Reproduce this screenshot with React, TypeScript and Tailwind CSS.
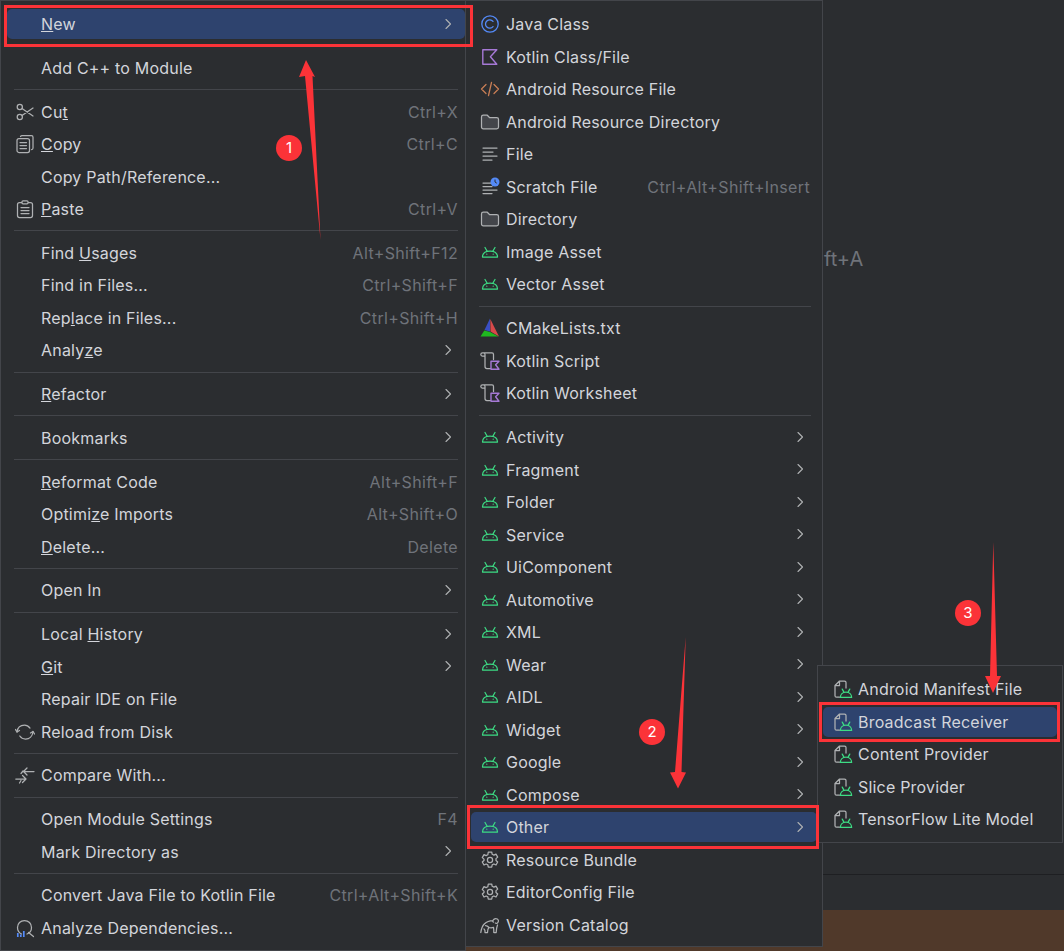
import React from 'react';

const ANDROID = '#3ddc84';
const GREY = '#afb1b3';

type IconName =
  | 'java' | 'kotlin' | 'code' | 'folder' | 'file' | 'scratch' | 'android' | 'cmake'
  | 'script' | 'gear' | 'gradle' | 'androidFile' | 'scissors' | 'copy' | 'paste'
  | 'reload' | 'compare' | 'analyze';

const Icon = ({ name }: { name: IconName }) => {
  const common = { fill: 'none', stroke: GREY, strokeWidth: 1.25, strokeLinecap: 'round' as const, strokeLinejoin: 'round' as const };
  const droid = (
    <g fill="none" stroke={ANDROID} strokeWidth="1.25" strokeLinecap="round" strokeLinejoin="round">
      <path d="M2.500 15C2.500 11 5.500 9 10 9s7.500 2 7.500 6Z" />
      <path d="M5 5.500l2.200 3.700M15 5.500l-2.200 3.700" />
      <path d="M6.800 12.200h.01M13.200 12.200h.01" />
    </g>
  );
  return (
    <svg width="20" height="20" viewBox="0 0 20 20" className="shrink-0">
      {name === 'java' && (
        <g fill="none" stroke="#548af7" strokeWidth="1.3">
          <circle cx="10" cy="10" r="8.200" />
          <path d="M13 7.400A4.200 4.200 0 1 0 13 12.600" strokeLinecap="round" />
        </g>
      )}
      {name === 'kotlin' && <path d="M2.800 2.800h14l-6.400 7 6.400 7.400h-14Z" fill="none" stroke="#a679d6" strokeWidth="1.4" strokeLinejoin="round" />}
      {name === 'code' && (
        <g fill="none" stroke="#c77d55" strokeWidth="1.3" strokeLinecap="round" strokeLinejoin="round">
          <path d="M6 5.500L1.500 10 6 14.500M14 5.500l4.500 4.500-4.500 4.500M11.500 3.500l-3 13" />
        </g>
      )}
      {name === 'folder' && <path d="M1.500 5C1.500 4 2.300 3.200 3.300 3.200h4l2.200 2.300h7.200c1 0 1.800.8 1.800 1.800v7.700c0 1-.8 1.800-1.800 1.800H3.300c-1 0-1.800-.8-1.800-1.800Z" {...common} fill="#43454a" />}
      {name === 'file' && <path d="M3 4h14M3 8h10M3 12h14M3 16h9" {...common} />}
      {name === 'scratch' && (
        <g>
          <path d="M3 6h8M3 9.500h9M3 13h14M3 16.500h9" {...common} />
          <circle cx="15" cy="5" r="4.500" fill="#548af7" />
          <path d="M15 2.500V5l1.800 1.200" fill="none" stroke="#2b2d30" strokeWidth="1" />
        </g>
      )}
      {name === 'android' && droid}
      {name === 'cmake' && (
        <g>
          <path d="M10 .500L4.500 12 10 13.500Z" fill="#3a4fc4" />
          <path d="M10.300 1L19 18.500 10.500 13.500Z" fill="#d84a4a" />
          <path d="M4.300 12.500L.5 18.500H18.500L10 14Z" fill="#1fb81f" />
        </g>
      )}
      {name === 'script' && (
        <g>
          <path d="M.8 3.500C.8 2.500 1.600 1.800 2.500 1.800h9.500c1 0 1.500.8 1.500 1.700v5M3.500 1.800C4.500 1.800 5 2.700 5 3.500V15.500c0 1.200 1 2 2 2h3.500M.8 3.500c0 1 .8 1.500 1.500 1.500H5" {...common} />
          <path d="M11 10.200h8l-3.400 3.600 3.400 4.400h-8Z" fill="#2b2d30" stroke="#a679d6" strokeWidth="1.400" strokeLinejoin="round" />
        </g>
      )}
      {name === 'gear' && (
        <g {...common}>
          <path d="M8.300 2h3.400l.5 2.300 1.700.8 2.100-1 1.700 3-1.700 1.500v1.900l1.700 1.500-1.700 3-2.100-1-1.700.8-.5 2.300H8.300l-.5-2.300-1.700-.8-2.100 1-1.700-3 1.700-1.500V9.100L2.300 7.600l1.700-3 2.100 1 1.700-.8Z" />
          <circle cx="10" cy="10" r="2.600" />
        </g>
      )}
      {name === 'gradle' && (
        <path d="M.8 17.500c.5-3.500 1.500-6.500 3.500-8.500 2.500-2.500 6-3.500 8.500-3.500 1-1.500 3-2.300 4.500-1.500 1.300.8 1.500 2.500.5 3.700-.8 1-2 1-2.500.3M13 5.500c-.5.500-.3 1.500.5 1.700M9 12.500c-1 .8-1.500 2.500-1.500 5H5c.3-1.700 0-2.700-1-3.500M9 12.500c1.500.5 3 .5 4.500-.2.300 2 .5 3.500.3 5.200h2.400c.2-2.800.3-5 1.300-7.500M5.500 10.500c1.500 0 2.500.8 3.500 2" {...common} />
      )}
      {name === 'androidFile' && (
        <g>
          <path d="M6.500 18.200H3.500C2.500 18.200 2 17.500 2 16.700V6.500L6.500 2h5c1 0 1.500.7 1.500 1.500V9M6.500 2v4.500H2" {...common} />
          <g transform="translate(5.500 6) scale(.75)" fill="none" stroke={ANDROID} strokeWidth="1.700" strokeLinecap="round" strokeLinejoin="round">
            <path d="M2.500 16.500C2.500 12.500 5.500 9.500 10 9.500s7.500 3 7.500 7Z" />
            <path d="M5 5.500l2.200 4M15 5.500l-2.200 4" />
          </g>
        </g>
      )}
      {name === 'scissors' && (
        <g {...common}>
          <circle cx="4.800" cy="5" r="2.600" />
          <circle cx="4.800" cy="15" r="2.600" />
          <path d="M7 6.500L18 14M7 13.500L18 6" />
        </g>
      )}
      {name === 'copy' && (
        <g {...common}>
          <rect x="2" y="4.500" width="12.500" height="14" rx="2" />
          <path d="M5.500 2.500c.3-.5.8-.8 1.500-.8h9.500c1 0 1.500.7 1.500 1.500V14c0 .8-.7 1.500-1.500 1.500M5 8.500h6.500M5 11.500h6.500M5 14.500h6.500" />
        </g>
      )}
      {name === 'paste' && (
        <g {...common}>
          <rect x="2.500" y="3.500" width="15" height="15" rx="2" />
          <rect x="7" y="1.800" width="6" height="3" rx="1" fill="#2b2d30" />
          <path d="M6 8.500h8M6 11.500h8M6 14.500h8" />
        </g>
      )}
      {name === 'reload' && (
        <g {...common}>
          <path d="M2 10c.5-4.500 3.500-7 7.500-7 2.500 0 4 1 5.500 3M18 9.500c-.5 4.500-3.500 7.500-7.500 7.500-2.500 0-4.500-1.200-5.700-3" />
          <path d="M.5 7.500L2 10l2.500-1.500M19.500 12L18 9.500 15.500 11" />
        </g>
      )}
      {name === 'compare' && (
        <g {...common}>
          <path d="M9 6.500h10M12 3L8.500 6.500 12 10M6 8.500l2-2.500" />
          <path d="M.8 14h10M7.500 10.500L11 14l-3.500 3.500M4.500 18l1.500-2.500" />
        </g>
      )}
      {name === 'analyze' && (
        <g>
          <path d="M6.500 16C4 14.800 2.500 12.500 2.500 9.500 2.500 5.500 5.500 2.500 9.500 2.500s7 3 7 7c0 3-1.500 5.500-4.500 6.500M13.500 14.500l5 4" {...common} />
          <path d="M2.800 15v4M5.800 16.500V19M8.800 13v6" fill="none" stroke="#548af7" strokeWidth="1.700" />
        </g>
      )}
    </svg>
  );
};

const Chevron = () => (
  <svg width="8" height="14" viewBox="0 0 8 14" className="ml-auto mr-[6px] -mt-px shrink-0">
    <path d="M2 2.500l4.500 4.500L2 11.500" fill="none" stroke="#afb1b3" strokeWidth="1.100" strokeLinecap="round" strokeLinejoin="round" />
  </svg>
);

type Row = {
  label?: React.ReactNode;
  icon?: IconName;
  shortcut?: string;
  more?: boolean;
  active?: boolean;
  sep?: boolean;
};

const sep: Row = { sep: true };

const mainItems: Row[] = [
  { label: <><u>N</u>ew</>, more: true, active: true },
  sep,
  { label: 'Add C++ to Module' },
  sep,
  { label: <>Cu<u>t</u></>, icon: 'scissors', shortcut: 'Ctrl+X' },
  { label: <><u>C</u>opy</>, icon: 'copy', shortcut: 'Ctrl+C' },
  { label: 'Copy Path/Reference...' },
  { label: <><u>P</u>aste</>, icon: 'paste', shortcut: 'Ctrl+V' },
  sep,
  { label: <>Find <u>U</u>sages</>, shortcut: 'Alt+Shift+F12' },
  { label: 'Find in Files...', shortcut: 'Ctrl+Shift+F' },
  { label: <>Rep<u>l</u>ace in Files...</>, shortcut: 'Ctrl+Shift+H' },
  { label: <>Analy<u>z</u>e</>, more: true },
  sep,
  { label: <><u>R</u>efactor</>, more: true },
  sep,
  { label: 'Bookmarks', more: true },
  sep,
  { label: <><u>R</u>eformat Code</>, shortcut: 'Alt+Shift+F' },
  { label: <>Optimi<u>z</u>e Imports</>, shortcut: 'Alt+Shift+O' },
  { label: <><u>D</u>elete...</>, shortcut: 'Delete' },
  sep,
  { label: 'Open In', more: true },
  sep,
  { label: <>Local <u>H</u>istory</>, more: true },
  { label: <><u>G</u>it</>, more: true },
  { label: 'Repair IDE on File' },
  { label: 'Reload from Disk', icon: 'reload' },
  sep,
  { label: 'Compare With...', icon: 'compare' },
  sep,
  { label: 'Open Module Settings', shortcut: 'F4' },
  { label: 'Mark Directory as', more: true },
  sep,
  { label: 'Convert Java File to Kotlin File', shortcut: 'Ctrl+Alt+Shift+K' },
  { label: 'Analyze Dependencies...', icon: 'analyze' },
];

const newItems: Row[] = [
  { label: 'Java Class', icon: 'java' },
  { label: 'Kotlin Class/File', icon: 'kotlin' },
  { label: 'Android Resource File', icon: 'code' },
  { label: 'Android Resource Directory', icon: 'folder' },
  { label: 'File', icon: 'file' },
  { label: 'Scratch File', icon: 'scratch', shortcut: 'Ctrl+Alt+Shift+Insert' },
  { label: 'Directory', icon: 'folder' },
  { label: 'Image Asset', icon: 'android' },
  { label: 'Vector Asset', icon: 'android' },
  sep,
  { label: 'CMakeLists.txt', icon: 'cmake' },
  { label: 'Kotlin Script', icon: 'script' },
  { label: 'Kotlin Worksheet', icon: 'script' },
  sep,
  { label: 'Activity', icon: 'android', more: true },
  { label: 'Fragment', icon: 'android', more: true },
  { label: 'Folder', icon: 'android', more: true },
  { label: 'Service', icon: 'android', more: true },
  { label: 'UiComponent', icon: 'android', more: true },
  { label: 'Automotive', icon: 'android', more: true },
  { label: 'XML', icon: 'android', more: true },
  { label: 'Wear', icon: 'android', more: true },
  { label: 'AIDL', icon: 'android', more: true },
  { label: 'Widget', icon: 'android', more: true },
  { label: 'Google', icon: 'android', more: true },
  { label: 'Compose', icon: 'android', more: true },
  { label: 'Other', icon: 'android', more: true, active: true },
  { label: 'Resource Bundle', icon: 'gear' },
  { label: 'EditorConfig File', icon: 'gear' },
  { label: 'Version Catalog', icon: 'gradle' },
];

const otherItems: Row[] = [
  { label: 'Android Manifest File', icon: 'androidFile' },
  { label: 'Broadcast Receiver', icon: 'androidFile', active: true },
  { label: 'Content Provider', icon: 'androidFile' },
  { label: 'Slice Provider', icon: 'androidFile' },
  { label: 'TensorFlow Lite Model', icon: 'androidFile' },
];

const Menu = ({ items, className, rowClass, sepClass }: { items: Row[]; className: string; rowClass: string; sepClass: string }) => (
  <div className={`absolute border border-[#43454a] bg-[#2b2d30] py-[6.75px] ${className}`}>
    {items.map((item, i) =>
      item.sep ? (
        <div key={i} className={`flex items-center ${sepClass}`}>
          <div className="h-px w-full bg-[#43454a]" />
        </div>
      ) : (
        <div key={i} className="flex h-[32.5px] items-center">
          <div className={`flex h-[30px] flex-1 items-center rounded-[5px] ${rowClass} ${item.active ? 'bg-[#2e436e]' : ''}`}>
            <span className="flex w-[26px] shrink-0 items-center">{item.icon && <Icon name={item.icon} />}</span>
            <span className="whitespace-nowrap tracking-[0.2px]">{item.label}</span>
            {item.shortcut && <span className="ml-auto whitespace-nowrap tracking-[0.35px] text-[#6f737a]">{item.shortcut}</span>}
            {item.more && <Chevron />}
          </div>
        </div>
      ),
    )}
  </div>
);

const Badge = ({ n, className }: { n: number; className: string }) => (
  <div className={`absolute flex h-[26px] w-[26px] items-center justify-center rounded-full bg-[#fb3338] text-[15px] text-white ${className}`}>{n}</div>
);

const Box = ({ className }: { className: string }) => (
  <div className={`absolute border-[3px] border-[#fb3338] ${className}`} />
);

export default function App() {
  return (
    <div className="relative flex h-[951px] w-[1064px] flex-col overflow-hidden bg-[#2b2d30] text-[16px] text-[#d3d5db] [font-family:Inter,'Liberation_Sans',sans-serif]">
      {/* editor behind the menus */}
      <div className="h-[874px] pl-[824px] pt-[244px] text-[20px] text-[#6f737a]">ft+A</div>
      <div className="h-[36px] border-t border-[#1e1f22]" />
      <div className="flex-1 bg-[#50392a]" />

      <Menu items={mainItems} className="left-0 top-0 h-[951px] w-[466px]" rowClass="ml-[6px] pl-[8px] pr-[7px]" sepClass="h-[11.25px] ml-[13px] mr-[7px]" />
      <Menu items={newItems} className="left-[465px] top-0 h-[947px] w-[358px]" rowClass="mx-[5px] pl-[9px] pr-[7px]" sepClass="h-[11.5px] ml-[13px] mr-[11px]" />
      <Menu items={otherItems} className="left-[817px] top-[665px] w-[246px]" rowClass="mx-[5px] pl-[10px] [&>span:first-child]:w-[25px]" sepClass="" />

      {/* annotations */}
      <svg width="1064" height="951" className="pointer-events-none absolute left-0 top-0">
        <polygon points="306,60 315,77 312.500,76 320.500,240 305,76 299,77" fill="#fb3338" />
        <polygon points="685.700,637 681.500,772 686,772.500 678,788.500 670,772.500 675,772" fill="#fb3338" />
        <polygon points="993.300,542 997,676 1001,676 993,693 985,676 990,676" fill="#fb3338" />
      </svg>
      <Box className="left-[4px] top-[5px] h-[42px] w-[469px]" />
      <Box className="left-[467px] top-[805px] h-[44px] w-[352px]" />
      <Box className="left-[819px] top-[702px] h-[40px] w-[241px]" />
      <Badge n={1} className="left-[276px] top-[135px]" />
      <Badge n={2} className="left-[639px] top-[719px]" />
      <Badge n={3} className="left-[955px] top-[600px]" />
    </div>
  );
}
